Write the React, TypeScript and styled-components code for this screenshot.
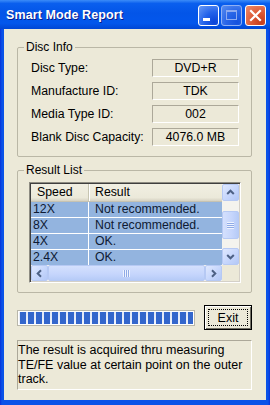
import * as React from 'react'
import styled, { createGlobalStyle } from 'styled-components'

const GlobalStyle = createGlobalStyle`
    html, body {
        margin: 0;
        padding: 0;
    }
    body {
        width: 270px;
        height: 405px;
        overflow: hidden;
        font-family: 'Liberation Sans', Arial, sans-serif;
        font-size: 12px;
        color: #000;
    }
`

const discInfo = [
    { label: 'Disc Type:', value: 'DVD+R' },
    { label: 'Manufacture ID:', value: 'TDK' },
    { label: 'Media Type ID:', value: '002' },
    { label: 'Blank Disc Capacity:', value: '4076.0 MB' },
]

const results = [
    { speed: '12X', result: 'Not recommended.' },
    { speed: '8X', result: 'Not recommended.' },
    { speed: '4X', result: 'OK.' },
    { speed: '2.4X', result: 'OK.' },
]

const Chevron = ({ rotate }: { rotate: number }): JSX.Element => (
    <svg width="9" height="9" viewBox="0 0 9 9" style={{ transform: `rotate(${rotate}deg)` }}>
        <path d="M1.2 6 L4.5 2.7 L7.8 6" fill="none" stroke="#4d6185" strokeWidth="2" />
    </svg>
)

const App = (): JSX.Element => {
    return (
        <>
            <GlobalStyle />
            <Window>
                <TitleBar>
                    <Title>Smart Mode Report</Title>
                    <CaptionButtons>
                        <CaptionButton $kind="min">
                            <svg width="19" height="19" viewBox="0 0 19 19">
                                <rect x="4" y="12" width="7" height="3" fill="#fff" />
                            </svg>
                        </CaptionButton>
                        <CaptionButton $kind="max">
                            <svg width="19" height="19" viewBox="0 0 19 19">
                                <rect x="4.5" y="4.5" width="10" height="9" fill="none" stroke="#8daaf0" strokeWidth="1" />
                                <rect x="4" y="4" width="11" height="2" fill="#8daaf0" />
                            </svg>
                        </CaptionButton>
                        <CaptionButton $kind="close">
                            <svg width="19" height="19" viewBox="0 0 19 19">
                                <path d="M5 5 L14 14 M14 5 L5 14" stroke="#fff" strokeWidth="2.2" strokeLinecap="square" />
                            </svg>
                        </CaptionButton>
                    </CaptionButtons>
                </TitleBar>
                <Client>
                    <GroupBox>
                        <Legend>Disc Info</Legend>
                        <InfoGrid>
                            {discInfo.map((item) => (
                                <React.Fragment key={item.label}>
                                    <InfoLabel>{item.label}</InfoLabel>
                                    <ValueBox>{item.value}</ValueBox>
                                </React.Fragment>
                            ))}
                        </InfoGrid>
                    </GroupBox>
                    <GroupBox $gapTop>
                        <Legend>Result List</Legend>
                        <ListInner>
                            <ListView>
                                <ListContent>
                                    <HeaderRow>
                                        <HeaderCell>Speed</HeaderCell>
                                        <HeaderCell>Result</HeaderCell>
                                    </HeaderRow>
                                    {results.map((r) => (
                                        <ItemRow key={r.speed}>
                                            <SpeedCell>{r.speed}</SpeedCell>
                                            <ResultCell>{r.result}</ResultCell>
                                        </ItemRow>
                                    ))}
                                </ListContent>
                                <VScroll>
                                    <ScrollButton>
                                        <Chevron rotate={0} />
                                    </ScrollButton>
                                    <VTrack>
                                        <VThumb>
                                            <VGrip />
                                        </VThumb>
                                    </VTrack>
                                    <ScrollButton>
                                        <Chevron rotate={180} />
                                    </ScrollButton>
                                </VScroll>
                                <HScroll>
                                    <ScrollButton>
                                        <Chevron rotate={-90} />
                                    </ScrollButton>
                                    <HThumb>
                                        <HGrip />
                                    </HThumb>
                                    <ScrollButton>
                                        <Chevron rotate={90} />
                                    </ScrollButton>
                                </HScroll>
                                <Corner />
                            </ListView>
                        </ListInner>
                    </GroupBox>
                    <ActionRow>
                        <Progress>
                            <ProgressFill />
                        </Progress>
                        <ExitButton>
                            <FocusRect>Exit</FocusRect>
                        </ExitButton>
                    </ActionRow>
                    <NoteBox>
                        The result is acquired thru measuring TE/FE value at certain point on the outer track.
                    </NoteBox>
                </Client>
            </Window>
        </>
    )
}

const Window = styled.div`
    width: 270px;
    height: 405px;
    display: flex;
    flex-direction: column;
    background: linear-gradient(90deg, #0831d9 0, #0a52e8 2px, #0a52e8 calc(100% - 2px), #0831d9 100%);
`
const TitleBar = styled.div`
    height: 29px;
    flex: none;
    display: flex;
    align-items: center;
    justify-content: space-between;
    padding: 0 4px 0 6px;
    background: linear-gradient(
        180deg,
        #3c8cf8 0%,
        #0a5fee 12%,
        #0355e8 45%,
        #0357ec 80%,
        #0046d4 100%
    );
`
const Title = styled.div`
    color: #fff;
    font-weight: 700;
    font-size: 12.5px;
    letter-spacing: 0.1px;
    text-shadow: 1px 1px 0 #0a1c8a;
    margin-top: 1px;
`
const CaptionButtons = styled.div`
    display: flex;
    gap: 2px;
    margin-top: 2px;
`
const CaptionButton = styled.div<{ $kind: 'min' | 'max' | 'close' }>`
    width: 21px;
    height: 21px;
    box-sizing: border-box;
    border: 1px solid ${(p) => (p.$kind === 'max' ? '#8fb0f4' : '#fff')};
    border-radius: 3px;
    margin-left: ${(p) => (p.$kind === 'close' ? '1px' : '0')};
    background: ${(p) =>
        p.$kind === 'close'
            ? 'radial-gradient(circle at 80% 85%, #c63d1c 0%, #dd5a37 45%, #ec8d6c 100%)'
            : p.$kind === 'max'
            ? 'radial-gradient(circle at 80% 85%, #1552de 0%, #2a66e8 50%, #5a8ef0 100%)'
            : 'radial-gradient(circle at 80% 85%, #0a44d8 0%, #2362ea 45%, #6a9bf6 100%)'};
    svg {
        display: block;
    }
`
const Client = styled.div`
    flex: 1;
    margin: 0 4px 5px;
    background: #ece9d8;
    display: flex;
    flex-direction: column;
    padding: 11px 14px 0 13px;
`
const GroupBox = styled.fieldset<{ $gapTop?: boolean }>`
    margin: ${(p) => (p.$gapTop ? '6px' : '0')} 0 0;
    padding: 0 6px;
    border: 1px solid #bab7a6;
    border-radius: 2px;
    min-width: 0;
`
const Legend = styled.legend`
    padding: 0 2px;
    line-height: 14px;
    font-size: 12px;
`
const InfoGrid = styled.div`
    display: grid;
    grid-template-columns: 1fr 87px;
    grid-auto-rows: 18px;
    row-gap: 5px;
    align-items: center;
    padding: 5px 6px 10px 7px;
`
const InfoLabel = styled.div`
    font-size: 12.3px;
    white-space: nowrap;
`
const ValueBox = styled.div`
    height: 18px;
    box-sizing: border-box;
    border: 1px solid;
    border-color: #aca899 #fff #fff #aca899;
    text-align: center;
    line-height: 16px;
    font-size: 12.3px;
`
const ListInner = styled.div`
    padding: 5px 4px 9px 5px;
`
const ListView = styled.div`
    width: 212px;
    height: 101px;
    box-sizing: border-box;
    border: 1px solid;
    border-color: #8e8c82 #fff #fff #8e8c82;
    padding: 1px;
    box-shadow: inset 1px 1px 0 #3f3f3f, inset -1px -1px 0 #d4d0c8;
    display: grid;
    grid-template-columns: 1fr 17px;
    grid-template-rows: 1fr 16px;
`
const ListContent = styled.div`
    background: #fff;
    overflow: hidden;
`
const HeaderRow = styled.div`
    display: grid;
    grid-template-columns: 58px 1fr;
    height: 18px;
    box-sizing: border-box;
    background: linear-gradient(180deg, #f1efe2 0%, #ebe9da 80%, #d6d2c2 100%);
    border-bottom: 1px solid #c5c2b2;
`
const HeaderCell = styled.div`
    line-height: 17px;
    padding-left: 6px;
    font-size: 12.3px;
    &:first-child {
        border-right: 1px solid #c7c5b2;
        box-shadow: 1px 0 0 #fff;
    }
`
const ItemRow = styled.div`
    display: grid;
    grid-template-columns: 58px 1fr;
    height: 16px;
    box-sizing: border-box;
    background: #93b4df;
    border-bottom: 1px solid #fff;
    color: #0e1a33;
    font-size: 12.3px;
    line-height: 15px;
`
const SpeedCell = styled.div`
    padding-left: 2px;
    border-right: 1px solid #fff;
`
const ResultCell = styled.div`
    padding-left: 6px;
    white-space: nowrap;
`
const ScrollButton = styled.div`
    width: 17px;
    height: 17px;
    flex: none;
    box-sizing: border-box;
    border: 1px solid #b6c9f4;
    border-radius: 2px;
    background: linear-gradient(135deg, #dfe8fe 0%, #c6d6fc 55%, #b3c8f6 100%);
    display: flex;
    align-items: center;
    justify-content: center;
    svg {
        display: block;
    }
`
const VScroll = styled.div`
    display: flex;
    flex-direction: column;
    background: #f4f3ee;
`
const VTrack = styled.div`
    flex: 1;
    padding-top: 10px;
`
const VThumb = styled.div`
    height: 28px;
    box-sizing: border-box;
    border: 1px solid #b6c9f4;
    border-radius: 2px;
    background: linear-gradient(90deg, #d4e0fd 0%, #c5d5fc 60%, #b6cbf7 100%);
    display: flex;
    align-items: center;
    justify-content: center;
`
const VGrip = styled.div`
    width: 7px;
    height: 7px;
    background: repeating-linear-gradient(180deg, #eef3fe 0 1px, #8faae6 1px 2px);
`
const HScroll = styled.div`
    display: flex;
    background: #f4f3ee;
    height: 16px;
    & > div {
        height: 16px;
    }
`
const HThumb = styled.div`
    flex: 1;
    box-sizing: border-box;
    border: 1px solid #b6c9f4;
    border-radius: 2px;
    background: linear-gradient(180deg, #d4e0fd 0%, #c5d5fc 60%, #b6cbf7 100%);
    display: flex;
    align-items: center;
    justify-content: center;
`
const HGrip = styled.div`
    width: 7px;
    height: 7px;
    background: repeating-linear-gradient(90deg, #eef3fe 0 1px, #8faae6 1px 2px);
`
const Corner = styled.div`
    background: #ece9d8;
`
const ActionRow = styled.div`
    display: flex;
    align-items: center;
    gap: 9px;
    margin-top: 12px;
`
const Progress = styled.div`
    width: 178px;
    height: 16px;
    box-sizing: border-box;
    border: 1px solid #b9b7aa;
    background: #fff;
    padding: 1px;
`
const ProgressFill = styled.div`
    height: 100%;
    background: repeating-linear-gradient(90deg, transparent 0 1px, #3366cc 1px 7px, transparent 7px 8px),
        linear-gradient(180deg, #dfe6f5 0%, #eef2fb 100%);
`
const ExitButton = styled.div`
    width: 48px;
    height: 25px;
    box-sizing: border-box;
    border: 1px solid #000;
    background: #ece9d8;
    box-shadow: inset 1px 1px 0 #fff, inset -1px -1px 0 #716f64;
    display: flex;
    padding: 3px;
`
const FocusRect = styled.div`
    flex: 1;
    border: 1px dotted #000;
    display: flex;
    align-items: center;
    justify-content: center;
    font-size: 12.5px;
`
const NoteBox = styled.div`
    margin-top: 10px;
    height: 50px;
    box-sizing: border-box;
    border: 1px solid;
    border-color: #aca899 #fff #fff #aca899;
    padding: 2px 1px 0 0;
    font-size: 12.5px;
    line-height: 14.5px;
`

export default App
